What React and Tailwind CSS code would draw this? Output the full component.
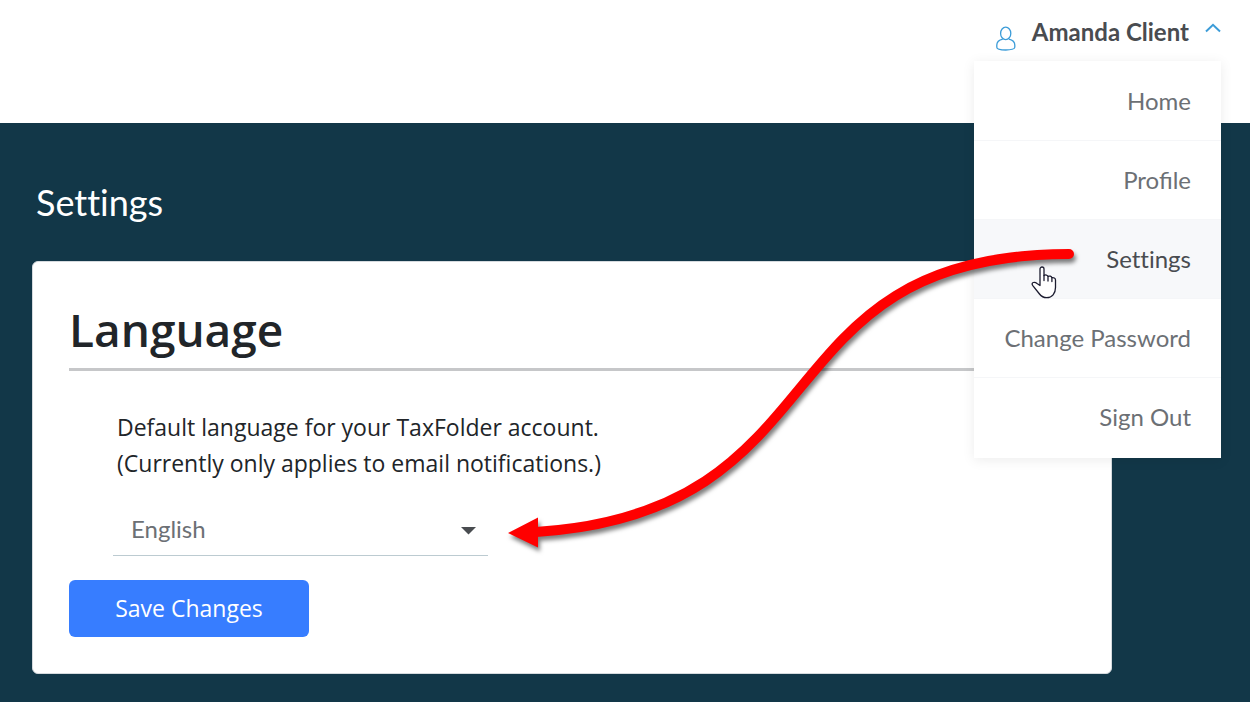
import { useState } from 'react';
import clsx from 'clsx';

const menuItems = ['Home', 'Profile', 'Settings', 'Change Password', 'Sign Out'];

function UserIcon() {
  return (
    <svg width="20" height="25" viewBox="0 0 20 25" fill="none" stroke="#3c9cd8" strokeWidth="1.3" aria-hidden="true">
      <ellipse cx="9.7" cy="7.4" rx="5.1" ry="6.2" />
      <path d="M6.8 13.2C3.4 14 .8 16 .8 19v2.2c0 1.6 4 2.8 9 2.8s9-1.2 9-2.8V19c0-3-2.6-5-6-5.8" />
    </svg>
  );
}

function HandCursor() {
  return (
    <svg width="26" height="33" viewBox="0 0 26 33" fill="#fff" stroke="#1b1b2f" strokeWidth="1.3" strokeLinecap="round" strokeLinejoin="round" aria-hidden="true">
      <path d="M9 19.5V3a2 2 0 0 1 4 0v6.500c1.400-1 3.600-.6 4 .9 1.600-.7 3.400-.2 3.900 1.300 1.700-.4 3.600.4 3.600 2.300v7.500c0 6-3.500 10.200-8.700 10.200-3.300 0-5.400-1.200-7.300-3.700L1.600 19.300c-.9-1.300-.4-2.400.7-2.800 1.300-.4 2.700.1 3.700 1z" />
      <path d="M13 9.500v5M17 10.500v4.500M20.900 11.800v3.700" fill="none" />
    </svg>
  );
}

function Arrow() {
  return (
    <svg width="580" height="320" viewBox="500 240 580 320" fill="none" className="drop-shadow-[2px_4px_2px_rgba(0,0,0,0.5)]" aria-hidden="true">
      <path d="M1069 254C756 254 848 512 536 532" stroke="#f00" strokeWidth="10" strokeLinecap="round" />
      <path d="M508 533L538 517.500V547.500Z" fill="#f00" />
    </svg>
  );
}

function UserMenu() {
  const [open, setOpen] = useState(true);

  return (
    <div className="relative pt-3">
      <button className="flex items-center text-2xl font-bold text-[#494c50]" aria-expanded={open} onClick={() => setOpen(!open)}>
        <span className="mr-4 pt-3"><UserIcon /></span>
        <span className="leading-10">Amanda Client</span>
        <svg width="16" height="10" viewBox="0 0 16 10" fill="none" stroke="#3c9cd8" strokeWidth="2" className="ml-4 mb-2" aria-hidden="true">
          <path d="M1 8.500L8 1.800L15 8.500" />
        </svg>
      </button>
      {open && (
        <nav className="absolute top-[61px] right-0 z-10 w-[247px] bg-white py-px shadow-[0_2px_12px_rgba(0,0,0,0.08)]">
          {menuItems.map((item) => (
            <a
              key={item}
              href="#"
              className={clsx(
                'block border-b border-[#f5f6f8] pr-[30px] text-right text-2xl leading-[78px] last:border-transparent',
                item === 'Settings' ? 'bg-[#f7f8fa] text-[#494c50] [font-variant-ligatures:none]' : 'text-[#6c7075]'
              )}
            >
              {item}
            </a>
          ))}
        </nav>
      )}
    </div>
  );
}

export default function App() {
  const [language, setLanguage] = useState('English');

  return (
    <div className="relative flex min-h-screen flex-col overflow-hidden bg-white font-['Lato',sans-serif]">
      <header className="flex h-[123px] items-start justify-end pr-[29px]">
        <UserMenu />
      </header>

      <main className="flex-1 bg-[#123748] pt-[52px] pr-[138px] pb-7 pl-8">
        <h1 className="pl-1 text-4xl leading-[54px] text-white [font-variant-ligatures:none]">Settings</h1>

        <section className="mt-8 rounded-md border border-[#d5dade] bg-white p-9 font-['Open_Sans',sans-serif] text-[#212529]">
          <h2 className="border-b-3 border-[#c6c7c9] pb-[7px] text-[46px] leading-[63px] font-semibold">Language</h2>
          <p className="mt-[38px] pl-12 text-[23px] leading-9">
            Default language for your TaxFolder account.
            <br />
            (Currently only applies to email notifications.)
          </p>
          <div className="relative mt-6 ml-11 w-[375px]">
            <select
              aria-label="Language"
              value={language}
              onChange={(e) => setLanguage(e.target.value)}
              className="h-[51px] w-full appearance-none border-b border-[#bccbd1] bg-transparent pb-0.5 pl-[18px] font-['Lato',sans-serif] text-2xl text-[#6c7075] outline-none"
            >
              <option>English</option>
              <option>Français</option>
            </select>
            <svg width="15" height="8" viewBox="0 0 15 8" className="pointer-events-none absolute top-[22px] right-3" aria-hidden="true">
              <path d="M0 0H15L7.500 7.500Z" fill="#494c50" />
            </svg>
          </div>
          <button className="mt-6 block h-[57px] w-60 rounded-md bg-[#377dff] text-[23px] text-white">Save Changes</button>
        </section>
      </main>

      <div className="pointer-events-none absolute top-60 right-[170px] z-20">
        <Arrow />
      </div>
      <div className="pointer-events-none absolute top-[266px] right-[193px] z-20">
        <HandCursor />
      </div>
    </div>
  );
}
